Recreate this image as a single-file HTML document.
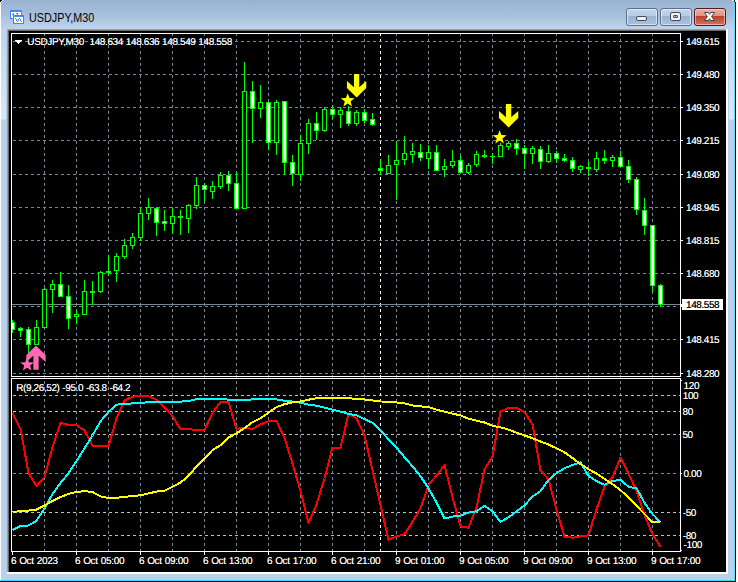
<!DOCTYPE html>
<html><head><meta charset="utf-8"><title>USDJPY,M30</title>
<style>
html,body{margin:0;padding:0;background:#fff;}
body{width:738px;height:582px;overflow:hidden;position:relative;font-family:"Liberation Sans",sans-serif;}
#win{position:absolute;left:0;top:0;width:736px;height:582px;background:#000;overflow:hidden;}
#frame{position:absolute;left:0;top:0;width:735px;height:581px;background:linear-gradient(#98b3d1 0px,#a5bedb 14px,#bed4ed 29px,#dbe8f5 119px,#b9d1ea 120px,#b9d1ea 581px);}
#lw{position:absolute;left:0;top:1px;width:1px;height:579px;background:#fdfeff;}
#cy-r{position:absolute;left:734px;top:1px;width:1px;height:580px;background:#5fd8ff;}
#cy-b{position:absolute;left:0;top:580px;width:735px;height:1px;background:#35dcf8;}
#bk-r{position:absolute;left:735px;top:2px;width:1px;height:580px;background:#000;}
#bk-b{position:absolute;left:0;top:581px;width:736px;height:1px;background:#000;}
#client{position:absolute;left:7px;top:29px;width:721px;height:545px;background:#fff;}
#client i{position:absolute;display:block}
#c1{left:0;top:0;width:719px;height:543px;background:#a0a0a0}
#c2{left:1px;top:1px;width:718px;height:542px;background:#696969}
#c3{left:2px;top:2px;width:717px;height:541px;background:#000}
#title{position:absolute;left:29px;top:10px;font-size:12px;line-height:16px;color:#000;white-space:nowrap;transform:scaleX(0.9);transform-origin:0 0;}
.btn{position:absolute;top:8px;width:32px;height:18px;box-sizing:border-box;border:1px solid #5c6e8a;border-radius:3px;background:linear-gradient(#c3d6ec 0,#b6cce5 7px,#98b3d2 7px,#a9c2de 16px);box-shadow:inset 0 0 0 1px rgba(255,255,255,.55);}
#bx{border-color:#4b1a26;background:linear-gradient(#eab2a6 0,#de9283 7px,#bb4029 7px,#d4705c 16px);box-shadow:inset 0 0 0 1px rgba(255,220,210,.6);}
svg{position:absolute;left:0;top:0}
.p{position:absolute;display:block}
.t{text-shadow:0 0 0.35px rgba(255,255,255,.75);position:absolute;font-size:10px;line-height:11px;color:#fff;white-space:pre;text-rendering:geometricPrecision;letter-spacing:-0.42px;word-spacing:0.4px;}
.k{color:#000;text-shadow:0 0 0.35px rgba(0,0,0,.75)}
.tm{letter-spacing:-0.3px}
.hd{letter-spacing:-0.38px}
.hd2{letter-spacing:-0.4px}
</style></head><body>
<div id="win">
<div id="frame"></div>
<div id="lw"></div><div id="cy-r"></div><div id="cy-b"></div><div id="bk-r"></div><div id="bk-b"></div>
<i class="p" style="left:0;top:0;width:2px;height:1px;background:#000"></i><i class="p" style="left:0;top:1px;width:1px;height:1px;background:#000"></i><i class="p" style="left:2px;top:0;width:1px;height:1px;background:#e8f0f8"></i><i class="p" style="left:1px;top:1px;width:1px;height:1px;background:#fff"></i><i class="p" style="left:734px;top:0;width:1px;height:2px;background:#111"></i><i class="p" style="left:735px;top:0;width:1px;height:2px;background:#fff"></i><i class="p" style="left:732px;top:0;width:2px;height:1px;background:#d5f3fb"></i>
<i class="p" style="left:6px;top:29px;width:1px;height:545px;background:#b5cfeb"></i><i class="p" style="left:728px;top:29px;width:1px;height:545px;background:#b5cfeb"></i>
<div id="client"><i id="c1"></i><i id="c2"></i><i id="c3"></i></div>
<div id="title">USDJPY,M30</div>
<div class="btn" id="bmin" style="left:626px"></div>
<div class="btn" id="bmax" style="left:660px"></div>
<div class="btn" id="bx" style="left:694px"></div>
<svg width="738" height="582" viewBox="0 0 738 582" shape-rendering="crispEdges">
<!-- title icon -->
<g>
<rect x="10" y="10" width="12" height="9" fill="#4a86ff"/>
<rect x="11" y="12" width="10" height="6" fill="#fffdf6"/>
<rect x="11" y="10" width="1" height="1" fill="#4b8c86"/>
<rect x="11" y="18" width="1" height="1" fill="#4b8c86"/>
<rect x="13" y="10" width="1" height="1" fill="#4b8c86"/>
<rect x="13" y="18" width="1" height="1" fill="#4b8c86"/>
<rect x="15" y="10" width="1" height="1" fill="#4b8c86"/>
<rect x="15" y="18" width="1" height="1" fill="#4b8c86"/>
<rect x="17" y="10" width="1" height="1" fill="#4b8c86"/>
<rect x="17" y="18" width="1" height="1" fill="#4b8c86"/>
<rect x="19" y="10" width="1" height="1" fill="#4b8c86"/>
<rect x="19" y="18" width="1" height="1" fill="#4b8c86"/>
<rect x="10" y="11" width="1" height="1" fill="#4b8c86"/>
<rect x="21" y="11" width="1" height="1" fill="#4b8c86"/>
<rect x="10" y="13" width="1" height="1" fill="#4b8c86"/>
<rect x="21" y="13" width="1" height="1" fill="#4b8c86"/>
<rect x="10" y="15" width="1" height="1" fill="#4b8c86"/>
<rect x="21" y="15" width="1" height="1" fill="#4b8c86"/>
<rect x="10" y="17" width="1" height="1" fill="#4b8c86"/>
<rect x="21" y="17" width="1" height="1" fill="#4b8c86"/>
<rect x="14" y="11" width="1" height="1" fill="#35c96a"/>
<rect x="18" y="11" width="1" height="1" fill="#35c96a"/>
<rect x="12" y="14" width="1" height="1" fill="#4a86ff"/>
<rect x="13" y="13" width="1" height="1" fill="#4a86ff"/>
<rect x="13" y="14" width="1" height="1" fill="#4a86ff"/>
<rect x="16" y="13" width="1" height="1" fill="#4a86ff"/>
<rect x="17" y="13" width="1" height="1" fill="#4a86ff"/>
<rect x="17" y="14" width="1" height="1" fill="#4a86ff"/>
<rect x="18" y="15" width="1" height="1" fill="#4a86ff"/>
<rect x="13" y="15" width="11" height="9" fill="#4a86ff"/>
<rect x="14" y="17" width="9" height="6" fill="#fffdf6"/>
<rect x="14" y="15" width="1" height="1" fill="#4b8c86"/>
<rect x="14" y="23" width="1" height="1" fill="#4b8c86"/>
<rect x="16" y="15" width="1" height="1" fill="#4b8c86"/>
<rect x="16" y="23" width="1" height="1" fill="#4b8c86"/>
<rect x="18" y="15" width="1" height="1" fill="#4b8c86"/>
<rect x="18" y="23" width="1" height="1" fill="#4b8c86"/>
<rect x="20" y="15" width="1" height="1" fill="#4b8c86"/>
<rect x="20" y="23" width="1" height="1" fill="#4b8c86"/>
<rect x="22" y="15" width="1" height="1" fill="#4b8c86"/>
<rect x="22" y="23" width="1" height="1" fill="#4b8c86"/>
<rect x="13" y="16" width="1" height="1" fill="#4b8c86"/>
<rect x="23" y="16" width="1" height="1" fill="#4b8c86"/>
<rect x="13" y="18" width="1" height="1" fill="#4b8c86"/>
<rect x="23" y="18" width="1" height="1" fill="#4b8c86"/>
<rect x="13" y="20" width="1" height="1" fill="#4b8c86"/>
<rect x="23" y="20" width="1" height="1" fill="#4b8c86"/>
<rect x="13" y="22" width="1" height="1" fill="#4b8c86"/>
<rect x="23" y="22" width="1" height="1" fill="#4b8c86"/>
<rect x="14" y="16" width="1" height="1" fill="#35c96a"/>
<rect x="17" y="16" width="1" height="1" fill="#40d0f0"/>
<rect x="21" y="16" width="1" height="1" fill="#35c96a"/>
<rect x="15" y="18" width="1" height="1" fill="#4a86ff"/>
<rect x="16" y="19" width="1" height="1" fill="#4a86ff"/>
<rect x="16" y="20" width="1" height="1" fill="#4a86ff"/>
<rect x="17" y="21" width="1" height="1" fill="#4a86ff"/>
<rect x="18" y="20" width="1" height="1" fill="#4a86ff"/>
<rect x="18" y="19" width="1" height="1" fill="#4a86ff"/>
<rect x="19" y="18" width="1" height="1" fill="#4a86ff"/>
<rect x="20" y="19" width="1" height="1" fill="#4a86ff"/>
<rect x="20" y="20" width="1" height="1" fill="#4a86ff"/>
<rect x="21" y="21" width="1" height="1" fill="#4a86ff"/>
</g>
<!-- button glyphs -->
<g shape-rendering="geometricPrecision"><rect x="636.5" y="16.5" width="10" height="4" rx="1.5" fill="#f1f1f1" stroke="#454a5c"/>
<rect x="670.5" y="12.5" width="10" height="8" rx="1.5" fill="#f1f1f1" stroke="#454a5c"/>
<rect x="673.5" y="15.5" width="4" height="2" rx="0.5" fill="#9fb9d8" stroke="#454a5c"/></g>
<g shape-rendering="auto"><path d="M704.5,12.5 L708.2,12.5 L709.5,14.3 L710.8,12.5 L714.5,12.5 L711.6,16.5 L714.5,20.5 L710.8,20.5 L709.5,18.7 L708.2,20.5 L704.5,20.5 L707.4,16.5 Z" fill="#fff" stroke="#3b4759" stroke-width="1" stroke-linejoin="round"/></g>
<line x1="44.5" y1="33" x2="44.5" y2="551" stroke="#778899" stroke-width="1" stroke-dasharray="3 3" stroke-dashoffset="0"/>
<line x1="76.5" y1="33" x2="76.5" y2="551" stroke="#778899" stroke-width="1" stroke-dasharray="3 3" stroke-dashoffset="0"/>
<line x1="108.5" y1="33" x2="108.5" y2="551" stroke="#778899" stroke-width="1" stroke-dasharray="3 3" stroke-dashoffset="0"/>
<line x1="140.5" y1="33" x2="140.5" y2="551" stroke="#778899" stroke-width="1" stroke-dasharray="3 3" stroke-dashoffset="0"/>
<line x1="172.5" y1="33" x2="172.5" y2="551" stroke="#778899" stroke-width="1" stroke-dasharray="3 3" stroke-dashoffset="0"/>
<line x1="204.5" y1="33" x2="204.5" y2="551" stroke="#778899" stroke-width="1" stroke-dasharray="3 3" stroke-dashoffset="0"/>
<line x1="236.5" y1="33" x2="236.5" y2="551" stroke="#778899" stroke-width="1" stroke-dasharray="3 3" stroke-dashoffset="0"/>
<line x1="268.5" y1="33" x2="268.5" y2="551" stroke="#778899" stroke-width="1" stroke-dasharray="3 3" stroke-dashoffset="0"/>
<line x1="300.5" y1="33" x2="300.5" y2="551" stroke="#778899" stroke-width="1" stroke-dasharray="3 3" stroke-dashoffset="0"/>
<line x1="332.5" y1="33" x2="332.5" y2="551" stroke="#778899" stroke-width="1" stroke-dasharray="3 3" stroke-dashoffset="0"/>
<line x1="364.5" y1="33" x2="364.5" y2="551" stroke="#778899" stroke-width="1" stroke-dasharray="3 3" stroke-dashoffset="0"/>
<line x1="396.5" y1="33" x2="396.5" y2="551" stroke="#778899" stroke-width="1" stroke-dasharray="3 3" stroke-dashoffset="0"/>
<line x1="428.5" y1="33" x2="428.5" y2="551" stroke="#778899" stroke-width="1" stroke-dasharray="3 3" stroke-dashoffset="0"/>
<line x1="460.5" y1="33" x2="460.5" y2="551" stroke="#778899" stroke-width="1" stroke-dasharray="3 3" stroke-dashoffset="0"/>
<line x1="492.5" y1="33" x2="492.5" y2="551" stroke="#778899" stroke-width="1" stroke-dasharray="3 3" stroke-dashoffset="0"/>
<line x1="524.5" y1="33" x2="524.5" y2="551" stroke="#778899" stroke-width="1" stroke-dasharray="3 3" stroke-dashoffset="0"/>
<line x1="556.5" y1="33" x2="556.5" y2="551" stroke="#778899" stroke-width="1" stroke-dasharray="3 3" stroke-dashoffset="0"/>
<line x1="588.5" y1="33" x2="588.5" y2="551" stroke="#778899" stroke-width="1" stroke-dasharray="3 3" stroke-dashoffset="0"/>
<line x1="620.5" y1="33" x2="620.5" y2="551" stroke="#778899" stroke-width="1" stroke-dasharray="3 3" stroke-dashoffset="0"/>
<line x1="652.5" y1="33" x2="652.5" y2="551" stroke="#778899" stroke-width="1" stroke-dasharray="3 3" stroke-dashoffset="0"/>
<line x1="380.5" y1="33" x2="380.5" y2="551" stroke="#ffffff" stroke-width="1" stroke-dasharray="3 3" stroke-dashoffset="0"/>
<line x1="13" y1="41.5" x2="678" y2="41.5" stroke="#778899" stroke-width="1" stroke-dasharray="3 3" stroke-dashoffset="0"/>
<line x1="13" y1="74.5" x2="678" y2="74.5" stroke="#778899" stroke-width="1" stroke-dasharray="3 3" stroke-dashoffset="0"/>
<line x1="13" y1="107.5" x2="678" y2="107.5" stroke="#778899" stroke-width="1" stroke-dasharray="3 3" stroke-dashoffset="0"/>
<line x1="13" y1="140.5" x2="678" y2="140.5" stroke="#778899" stroke-width="1" stroke-dasharray="3 3" stroke-dashoffset="0"/>
<line x1="13" y1="174.5" x2="678" y2="174.5" stroke="#778899" stroke-width="1" stroke-dasharray="3 3" stroke-dashoffset="0"/>
<line x1="13" y1="207.5" x2="678" y2="207.5" stroke="#778899" stroke-width="1" stroke-dasharray="3 3" stroke-dashoffset="0"/>
<line x1="13" y1="240.5" x2="678" y2="240.5" stroke="#778899" stroke-width="1" stroke-dasharray="3 3" stroke-dashoffset="0"/>
<line x1="13" y1="273.5" x2="678" y2="273.5" stroke="#778899" stroke-width="1" stroke-dasharray="3 3" stroke-dashoffset="0"/>
<line x1="13" y1="306.5" x2="678" y2="306.5" stroke="#778899" stroke-width="1" stroke-dasharray="3 3" stroke-dashoffset="0"/>
<line x1="13" y1="339.5" x2="678" y2="339.5" stroke="#778899" stroke-width="1" stroke-dasharray="3 3" stroke-dashoffset="0"/>
<line x1="13" y1="373.5" x2="678" y2="373.5" stroke="#778899" stroke-width="1" stroke-dasharray="3 3" stroke-dashoffset="0"/>
<line x1="13" y1="395.5" x2="680" y2="395.5" stroke="#c0c0c0" stroke-width="1" stroke-dasharray="3 3" stroke-dashoffset="0"/>
<line x1="13" y1="411.5" x2="680" y2="411.5" stroke="#c0c0c0" stroke-width="1" stroke-dasharray="3 3" stroke-dashoffset="0"/>
<line x1="13" y1="434.5" x2="680" y2="434.5" stroke="#c0c0c0" stroke-width="1" stroke-dasharray="3 3" stroke-dashoffset="0"/>
<line x1="13" y1="473.5" x2="678" y2="473.5" stroke="#778899" stroke-width="1" stroke-dasharray="3 3" stroke-dashoffset="0"/>
<line x1="13" y1="512.5" x2="680" y2="512.5" stroke="#c0c0c0" stroke-width="1" stroke-dasharray="3 3" stroke-dashoffset="0"/>
<line x1="13" y1="535.5" x2="680" y2="535.5" stroke="#c0c0c0" stroke-width="1" stroke-dasharray="3 3" stroke-dashoffset="0"/>
<rect x="12" y="304" width="668" height="1" fill="#778899"/>
<clipPath id="cm"><rect x="12" y="34" width="668" height="342"/></clipPath><clipPath id="cs"><rect x="12" y="379" width="668" height="172"/></clipPath>
<g clip-path="url(#cm)">
<rect x="12" y="320" width="1" height="13" fill="#00ff00"/>
<rect x="10" y="322" width="5" height="8" fill="#00ff00"/>
<rect x="11" y="323" width="3" height="6" fill="#ffffff"/>
<rect x="20" y="327" width="1" height="10" fill="#00ff00"/>
<rect x="18" y="328" width="5" height="3" fill="#00ff00"/>
<rect x="19" y="329" width="3" height="1" fill="#ffffff"/>
<rect x="28" y="327" width="1" height="26" fill="#00ff00"/>
<rect x="26" y="329" width="5" height="16" fill="#00ff00"/>
<rect x="27" y="330" width="3" height="14" fill="#ffffff"/>
<rect x="36" y="320" width="1" height="25" fill="#00ff00"/>
<rect x="34" y="327" width="5" height="18" fill="#00ff00"/>
<rect x="35" y="328" width="3" height="16" fill="#000000"/>
<rect x="44" y="288" width="1" height="40" fill="#00ff00"/>
<rect x="42" y="289" width="5" height="39" fill="#00ff00"/>
<rect x="43" y="290" width="3" height="37" fill="#000000"/>
<rect x="52" y="280" width="1" height="33" fill="#00ff00"/>
<rect x="50" y="284" width="5" height="6" fill="#00ff00"/>
<rect x="51" y="285" width="3" height="4" fill="#000000"/>
<rect x="60" y="272" width="1" height="25" fill="#00ff00"/>
<rect x="58" y="284" width="5" height="13" fill="#00ff00"/>
<rect x="59" y="285" width="3" height="11" fill="#ffffff"/>
<rect x="68" y="285" width="1" height="44" fill="#00ff00"/>
<rect x="66" y="296" width="5" height="23" fill="#00ff00"/>
<rect x="67" y="297" width="3" height="21" fill="#ffffff"/>
<rect x="76" y="310" width="1" height="14" fill="#00ff00"/>
<rect x="74" y="314" width="5" height="3" fill="#00ff00"/>
<rect x="75" y="315" width="3" height="1" fill="#000000"/>
<rect x="84" y="280" width="1" height="35" fill="#00ff00"/>
<rect x="82" y="291" width="5" height="24" fill="#00ff00"/>
<rect x="83" y="292" width="3" height="22" fill="#000000"/>
<rect x="92" y="281" width="1" height="24" fill="#00ff00"/>
<rect x="90" y="291" width="5" height="2" fill="#00ff00"/>
<rect x="100" y="271" width="1" height="22" fill="#00ff00"/>
<rect x="98" y="272" width="5" height="20" fill="#00ff00"/>
<rect x="99" y="273" width="3" height="18" fill="#000000"/>
<rect x="108" y="255" width="1" height="21" fill="#00ff00"/>
<rect x="106" y="271" width="5" height="2" fill="#00ff00"/>
<rect x="116" y="253" width="1" height="29" fill="#00ff00"/>
<rect x="114" y="256" width="5" height="15" fill="#00ff00"/>
<rect x="115" y="257" width="3" height="13" fill="#000000"/>
<rect x="124" y="239" width="1" height="20" fill="#00ff00"/>
<rect x="122" y="245" width="5" height="12" fill="#00ff00"/>
<rect x="123" y="246" width="3" height="10" fill="#000000"/>
<rect x="132" y="233" width="1" height="16" fill="#00ff00"/>
<rect x="130" y="237" width="5" height="9" fill="#00ff00"/>
<rect x="131" y="238" width="3" height="7" fill="#000000"/>
<rect x="140" y="208" width="1" height="33" fill="#00ff00"/>
<rect x="138" y="213" width="5" height="25" fill="#00ff00"/>
<rect x="139" y="214" width="3" height="23" fill="#000000"/>
<rect x="148" y="198" width="1" height="22" fill="#00ff00"/>
<rect x="146" y="207" width="5" height="7" fill="#00ff00"/>
<rect x="147" y="208" width="3" height="5" fill="#000000"/>
<rect x="156" y="207" width="1" height="29" fill="#00ff00"/>
<rect x="154" y="208" width="5" height="15" fill="#00ff00"/>
<rect x="155" y="209" width="3" height="13" fill="#ffffff"/>
<rect x="164" y="210" width="1" height="21" fill="#00ff00"/>
<rect x="162" y="221" width="5" height="3" fill="#00ff00"/>
<rect x="163" y="222" width="3" height="1" fill="#ffffff"/>
<rect x="172" y="208" width="1" height="26" fill="#00ff00"/>
<rect x="170" y="216" width="5" height="8" fill="#00ff00"/>
<rect x="171" y="217" width="3" height="6" fill="#000000"/>
<rect x="180" y="210" width="1" height="25" fill="#00ff00"/>
<rect x="178" y="216" width="5" height="2" fill="#00ff00"/>
<rect x="188" y="204" width="1" height="29" fill="#00ff00"/>
<rect x="186" y="205" width="5" height="14" fill="#00ff00"/>
<rect x="187" y="206" width="3" height="12" fill="#000000"/>
<rect x="196" y="177" width="1" height="32" fill="#00ff00"/>
<rect x="194" y="185" width="5" height="21" fill="#00ff00"/>
<rect x="195" y="186" width="3" height="19" fill="#000000"/>
<rect x="204" y="183" width="1" height="18" fill="#00ff00"/>
<rect x="202" y="185" width="5" height="5" fill="#00ff00"/>
<rect x="203" y="186" width="3" height="3" fill="#ffffff"/>
<rect x="212" y="181" width="1" height="18" fill="#00ff00"/>
<rect x="210" y="186" width="5" height="6" fill="#00ff00"/>
<rect x="211" y="187" width="3" height="4" fill="#000000"/>
<rect x="220" y="172" width="1" height="17" fill="#00ff00"/>
<rect x="218" y="175" width="5" height="12" fill="#00ff00"/>
<rect x="219" y="176" width="3" height="10" fill="#000000"/>
<rect x="228" y="171" width="1" height="20" fill="#00ff00"/>
<rect x="226" y="175" width="5" height="9" fill="#00ff00"/>
<rect x="227" y="176" width="3" height="7" fill="#ffffff"/>
<rect x="236" y="172" width="1" height="37" fill="#00ff00"/>
<rect x="234" y="183" width="5" height="26" fill="#00ff00"/>
<rect x="235" y="184" width="3" height="24" fill="#ffffff"/>
<rect x="244" y="62" width="1" height="147" fill="#00ff00"/>
<rect x="242" y="91" width="5" height="118" fill="#00ff00"/>
<rect x="243" y="92" width="3" height="116" fill="#000000"/>
<rect x="252" y="81" width="1" height="62" fill="#00ff00"/>
<rect x="250" y="91" width="5" height="18" fill="#00ff00"/>
<rect x="251" y="92" width="3" height="16" fill="#ffffff"/>
<rect x="260" y="85" width="1" height="33" fill="#00ff00"/>
<rect x="258" y="102" width="5" height="7" fill="#00ff00"/>
<rect x="259" y="103" width="3" height="5" fill="#000000"/>
<rect x="268" y="102" width="1" height="48" fill="#00ff00"/>
<rect x="266" y="102" width="5" height="41" fill="#00ff00"/>
<rect x="267" y="103" width="3" height="39" fill="#ffffff"/>
<rect x="276" y="100" width="1" height="55" fill="#00ff00"/>
<rect x="274" y="102" width="5" height="41" fill="#00ff00"/>
<rect x="275" y="103" width="3" height="39" fill="#000000"/>
<rect x="284" y="101" width="1" height="74" fill="#00ff00"/>
<rect x="282" y="101" width="5" height="62" fill="#00ff00"/>
<rect x="283" y="102" width="3" height="60" fill="#ffffff"/>
<rect x="292" y="155" width="1" height="31" fill="#00ff00"/>
<rect x="290" y="162" width="5" height="12" fill="#00ff00"/>
<rect x="291" y="163" width="3" height="10" fill="#ffffff"/>
<rect x="300" y="135" width="1" height="46" fill="#00ff00"/>
<rect x="298" y="143" width="5" height="32" fill="#00ff00"/>
<rect x="299" y="144" width="3" height="30" fill="#000000"/>
<rect x="308" y="119" width="1" height="35" fill="#00ff00"/>
<rect x="306" y="123" width="5" height="21" fill="#00ff00"/>
<rect x="307" y="124" width="3" height="19" fill="#000000"/>
<rect x="316" y="112" width="1" height="28" fill="#00ff00"/>
<rect x="314" y="123" width="5" height="8" fill="#00ff00"/>
<rect x="315" y="124" width="3" height="6" fill="#ffffff"/>
<rect x="324" y="107" width="1" height="25" fill="#00ff00"/>
<rect x="322" y="109" width="5" height="22" fill="#00ff00"/>
<rect x="323" y="110" width="3" height="20" fill="#000000"/>
<rect x="332" y="105" width="1" height="14" fill="#00ff00"/>
<rect x="330" y="109" width="5" height="6" fill="#00ff00"/>
<rect x="331" y="110" width="3" height="4" fill="#ffffff"/>
<rect x="340" y="107" width="1" height="21" fill="#00ff00"/>
<rect x="338" y="110" width="5" height="5" fill="#00ff00"/>
<rect x="339" y="111" width="3" height="3" fill="#000000"/>
<rect x="348" y="106" width="1" height="20" fill="#00ff00"/>
<rect x="346" y="111" width="5" height="13" fill="#00ff00"/>
<rect x="347" y="112" width="3" height="11" fill="#ffffff"/>
<rect x="356" y="110" width="1" height="16" fill="#00ff00"/>
<rect x="354" y="112" width="5" height="12" fill="#00ff00"/>
<rect x="355" y="113" width="3" height="10" fill="#000000"/>
<rect x="364" y="109" width="1" height="14" fill="#00ff00"/>
<rect x="362" y="112" width="5" height="9" fill="#00ff00"/>
<rect x="363" y="113" width="3" height="7" fill="#ffffff"/>
<rect x="372" y="113" width="1" height="13" fill="#00ff00"/>
<rect x="370" y="119" width="5" height="6" fill="#00ff00"/>
<rect x="371" y="120" width="3" height="4" fill="#ffffff"/>
<rect x="380" y="159" width="1" height="16" fill="#00ff00"/>
<rect x="378" y="168" width="5" height="3" fill="#00ff00"/>
<rect x="379" y="169" width="3" height="1" fill="#ffffff"/>
<rect x="388" y="155" width="1" height="19" fill="#00ff00"/>
<rect x="386" y="165" width="5" height="9" fill="#00ff00"/>
<rect x="387" y="166" width="3" height="7" fill="#000000"/>
<rect x="396" y="141" width="1" height="59" fill="#00ff00"/>
<rect x="394" y="160" width="5" height="5" fill="#00ff00"/>
<rect x="395" y="161" width="3" height="3" fill="#000000"/>
<rect x="404" y="136" width="1" height="29" fill="#00ff00"/>
<rect x="402" y="153" width="5" height="7" fill="#00ff00"/>
<rect x="403" y="154" width="3" height="5" fill="#000000"/>
<rect x="412" y="143" width="1" height="20" fill="#00ff00"/>
<rect x="410" y="151" width="5" height="4" fill="#00ff00"/>
<rect x="411" y="152" width="3" height="2" fill="#000000"/>
<rect x="420" y="144" width="1" height="17" fill="#00ff00"/>
<rect x="418" y="152" width="5" height="6" fill="#00ff00"/>
<rect x="419" y="153" width="3" height="4" fill="#ffffff"/>
<rect x="428" y="145" width="1" height="24" fill="#00ff00"/>
<rect x="426" y="152" width="5" height="7" fill="#00ff00"/>
<rect x="427" y="153" width="3" height="5" fill="#000000"/>
<rect x="436" y="145" width="1" height="26" fill="#00ff00"/>
<rect x="434" y="152" width="5" height="19" fill="#00ff00"/>
<rect x="435" y="153" width="3" height="17" fill="#ffffff"/>
<rect x="444" y="159" width="1" height="18" fill="#00ff00"/>
<rect x="442" y="166" width="5" height="4" fill="#00ff00"/>
<rect x="443" y="167" width="3" height="2" fill="#000000"/>
<rect x="452" y="150" width="1" height="18" fill="#00ff00"/>
<rect x="450" y="161" width="5" height="5" fill="#00ff00"/>
<rect x="451" y="162" width="3" height="3" fill="#000000"/>
<rect x="460" y="156" width="1" height="17" fill="#00ff00"/>
<rect x="458" y="160" width="5" height="13" fill="#00ff00"/>
<rect x="459" y="161" width="3" height="11" fill="#ffffff"/>
<rect x="468" y="163" width="1" height="11" fill="#00ff00"/>
<rect x="466" y="165" width="5" height="8" fill="#00ff00"/>
<rect x="467" y="166" width="3" height="6" fill="#000000"/>
<rect x="476" y="151" width="1" height="16" fill="#00ff00"/>
<rect x="474" y="154" width="5" height="11" fill="#00ff00"/>
<rect x="475" y="155" width="3" height="9" fill="#000000"/>
<rect x="484" y="150" width="1" height="8" fill="#00ff00"/>
<rect x="482" y="155" width="5" height="2" fill="#00ff00"/>
<rect x="492" y="153" width="1" height="11" fill="#00ff00"/>
<rect x="490" y="156" width="5" height="1" fill="#00ff00"/>
<rect x="500" y="143" width="1" height="14" fill="#00ff00"/>
<rect x="498" y="145" width="5" height="12" fill="#00ff00"/>
<rect x="499" y="146" width="3" height="10" fill="#000000"/>
<rect x="508" y="141" width="1" height="9" fill="#00ff00"/>
<rect x="506" y="143" width="5" height="4" fill="#00ff00"/>
<rect x="507" y="144" width="3" height="2" fill="#000000"/>
<rect x="516" y="139" width="1" height="16" fill="#00ff00"/>
<rect x="514" y="143" width="5" height="6" fill="#00ff00"/>
<rect x="515" y="144" width="3" height="4" fill="#ffffff"/>
<rect x="524" y="145" width="1" height="24" fill="#00ff00"/>
<rect x="522" y="148" width="5" height="6" fill="#00ff00"/>
<rect x="523" y="149" width="3" height="4" fill="#ffffff"/>
<rect x="532" y="146" width="1" height="18" fill="#00ff00"/>
<rect x="530" y="148" width="5" height="6" fill="#00ff00"/>
<rect x="531" y="149" width="3" height="4" fill="#000000"/>
<rect x="540" y="146" width="1" height="23" fill="#00ff00"/>
<rect x="538" y="149" width="5" height="13" fill="#00ff00"/>
<rect x="539" y="150" width="3" height="11" fill="#ffffff"/>
<rect x="548" y="145" width="1" height="18" fill="#00ff00"/>
<rect x="546" y="153" width="5" height="9" fill="#00ff00"/>
<rect x="547" y="154" width="3" height="7" fill="#000000"/>
<rect x="556" y="151" width="1" height="12" fill="#00ff00"/>
<rect x="554" y="153" width="5" height="6" fill="#00ff00"/>
<rect x="555" y="154" width="3" height="4" fill="#ffffff"/>
<rect x="564" y="154" width="1" height="8" fill="#00ff00"/>
<rect x="562" y="158" width="5" height="3" fill="#00ff00"/>
<rect x="563" y="159" width="3" height="1" fill="#ffffff"/>
<rect x="572" y="157" width="1" height="15" fill="#00ff00"/>
<rect x="570" y="160" width="5" height="9" fill="#00ff00"/>
<rect x="571" y="161" width="3" height="7" fill="#ffffff"/>
<rect x="580" y="165" width="1" height="8" fill="#00ff00"/>
<rect x="578" y="166" width="5" height="4" fill="#00ff00"/>
<rect x="579" y="167" width="3" height="2" fill="#000000"/>
<rect x="588" y="162" width="1" height="14" fill="#00ff00"/>
<rect x="586" y="167" width="5" height="2" fill="#00ff00"/>
<rect x="596" y="152" width="1" height="20" fill="#00ff00"/>
<rect x="594" y="158" width="5" height="12" fill="#00ff00"/>
<rect x="595" y="159" width="3" height="10" fill="#000000"/>
<rect x="604" y="150" width="1" height="14" fill="#00ff00"/>
<rect x="602" y="158" width="5" height="3" fill="#00ff00"/>
<rect x="603" y="159" width="3" height="1" fill="#ffffff"/>
<rect x="612" y="155" width="1" height="12" fill="#00ff00"/>
<rect x="610" y="157" width="5" height="4" fill="#00ff00"/>
<rect x="611" y="158" width="3" height="2" fill="#000000"/>
<rect x="620" y="151" width="1" height="16" fill="#00ff00"/>
<rect x="618" y="157" width="5" height="10" fill="#00ff00"/>
<rect x="619" y="158" width="3" height="8" fill="#ffffff"/>
<rect x="628" y="160" width="1" height="23" fill="#00ff00"/>
<rect x="626" y="166" width="5" height="14" fill="#00ff00"/>
<rect x="627" y="167" width="3" height="12" fill="#ffffff"/>
<rect x="636" y="177" width="1" height="38" fill="#00ff00"/>
<rect x="634" y="179" width="5" height="31" fill="#00ff00"/>
<rect x="635" y="180" width="3" height="29" fill="#ffffff"/>
<rect x="644" y="198" width="1" height="37" fill="#00ff00"/>
<rect x="642" y="210" width="5" height="16" fill="#00ff00"/>
<rect x="643" y="211" width="3" height="14" fill="#ffffff"/>
<rect x="652" y="225" width="1" height="67" fill="#00ff00"/>
<rect x="650" y="225" width="5" height="61" fill="#00ff00"/>
<rect x="651" y="226" width="3" height="59" fill="#ffffff"/>
<rect x="660" y="284" width="1" height="23" fill="#00ff00"/>
<rect x="658" y="285" width="5" height="20" fill="#00ff00"/>
<rect x="659" y="286" width="3" height="18" fill="#ffffff"/>
</g>
<g shape-rendering="crispEdges" clip-path="url(#cs)">
<polyline points="12.5,412.7 20.5,428.8 28.5,473.0 36.5,486.0 44.5,477.0 52.5,447.0 60.5,422.8 68.5,425.1 76.5,425.1 84.5,430.3 92.5,446.0 100.5,446.0 108.5,446.0 116.5,418.4 124.5,400.4 132.5,396.7 140.5,395.6 148.5,396.2 156.5,399.7 164.5,407.6 172.5,416.1 180.5,429.1 188.5,429.1 196.5,430.0 204.5,430.0 212.5,413.0 220.5,401.9 228.5,401.9 236.5,428.8 244.5,427.8 252.5,428.8 260.5,424.3 268.5,421.3 276.5,421.0 284.5,437.8 292.5,463.5 300.5,491.2 308.5,523.0 316.5,504.6 324.5,478.5 332.5,447.5 340.5,447.5 348.5,413.9 356.5,418.4 364.5,435.5 372.5,470.2 380.5,505.0 388.5,539.7 396.5,536.5 404.5,534.2 412.5,521.8 420.5,508.3 428.5,485.2 436.5,475.5 444.5,465.2 452.5,497.1 460.5,526.3 468.5,527.8 476.5,507.6 484.5,469.5 492.5,456.5 500.5,411.6 508.5,407.9 516.5,408.1 524.5,412.1 532.5,424.3 540.5,470.5 548.5,479.2 556.5,509.8 564.5,536.5 572.5,537.8 580.5,536.3 588.5,535.3 596.5,509.5 604.5,486.6 612.5,477.4 620.5,457.6 628.5,473.6 636.5,490.8 644.5,515.0 652.5,534.1 660.5,546.8" fill="none" stroke="#ff0000" stroke-width="2" stroke-linejoin="round" stroke-linecap="butt"/>
<polyline points="12.5,530.0 20.5,526.0 28.5,525.5 36.5,520.8 44.5,508.3 52.5,494.1 60.5,483.0 68.5,473.2 76.5,461.0 84.5,448.4 92.5,435.5 100.5,421.3 108.5,411.8 116.5,404.6 124.5,404.2 132.5,403.4 140.5,403.0 148.5,402.2 156.5,401.6 164.5,401.6 172.5,401.6 180.5,401.6 188.5,401.2 196.5,399.2 204.5,398.9 212.5,398.9 220.5,398.9 228.5,399.7 236.5,400.1 244.5,400.1 252.5,399.4 260.5,398.9 268.5,398.9 276.5,399.4 284.5,400.7 292.5,401.6 300.5,402.7 308.5,404.6 316.5,405.7 324.5,407.6 332.5,409.7 340.5,411.6 348.5,413.9 356.5,415.4 364.5,419.1 372.5,422.8 380.5,430.3 388.5,439.3 396.5,447.5 404.5,457.2 412.5,466.3 420.5,476.2 428.5,488.2 436.5,502.4 444.5,518.5 452.5,516.6 460.5,515.7 468.5,512.6 476.5,511.3 484.5,505.7 492.5,511.3 500.5,521.8 508.5,517.3 516.5,511.3 524.5,505.4 532.5,496.4 540.5,491.2 548.5,480.0 556.5,473.2 564.5,468.2 572.5,465.0 580.5,462.4 588.5,475.9 596.5,481.1 604.5,484.8 612.5,481.1 620.5,479.6 628.5,486.8 636.5,488.3 644.5,502.8 652.5,514.0 660.5,522.2" fill="none" stroke="#00ffff" stroke-width="2" stroke-linejoin="round" stroke-linecap="butt"/>
<polyline points="12.5,512.1 20.5,511.0 28.5,510.6 36.5,509.5 44.5,505.4 52.5,500.9 60.5,497.1 68.5,493.8 76.5,491.9 84.5,491.2 92.5,492.0 100.5,496.4 108.5,497.9 116.5,497.9 124.5,496.8 132.5,496.1 140.5,495.3 148.5,493.4 156.5,491.6 164.5,490.7 172.5,486.7 180.5,482.6 188.5,475.9 196.5,466.5 204.5,458.7 212.5,450.0 220.5,445.3 228.5,437.5 236.5,433.3 244.5,428.1 252.5,422.1 260.5,418.4 268.5,412.7 276.5,407.1 284.5,404.2 292.5,402.4 300.5,401.5 308.5,399.7 316.5,398.2 324.5,397.7 332.5,397.7 340.5,397.7 348.5,398.2 356.5,398.9 364.5,399.4 372.5,400.4 380.5,401.5 388.5,401.6 396.5,402.4 404.5,403.4 412.5,405.5 420.5,406.4 428.5,407.1 436.5,409.7 444.5,411.6 452.5,413.6 460.5,415.4 468.5,418.7 476.5,420.6 484.5,422.5 492.5,425.8 500.5,427.3 508.5,429.6 516.5,432.6 524.5,435.5 532.5,438.2 540.5,441.5 548.5,444.5 556.5,448.3 564.5,452.3 572.5,458.0 580.5,464.0 588.5,469.1 596.5,473.6 604.5,478.9 612.5,484.1 620.5,490.1 628.5,497.5 636.5,505.8 644.5,514.0 652.5,522.2 660.5,522.5" fill="none" stroke="#ffff00" stroke-width="2" stroke-linejoin="round" stroke-linecap="butt"/>
</g>
<g shape-rendering="auto">
<polygon points="347.7,93.2 349.5,98.0 354.6,98.2 350.6,101.4 352.0,106.4 347.7,103.6 343.4,106.4 344.8,101.4 340.8,98.2 345.9,98.0" fill="#ffff00"/>
<polygon points="353.95,73.90 359.25,73.90 359.25,87.20 366.25,81.00 366.25,88.00 356.60,97.50 346.95,88.00 346.95,81.00 353.95,87.20" fill="#ffff00"/>
<polygon points="499.6,130.2 501.4,135.0 506.5,135.2 502.5,138.4 503.9,143.4 499.6,140.6 495.3,143.4 496.7,138.4 492.7,135.2 497.8,135.0" fill="#ffff00"/>
<polygon points="505.95,104.00 511.25,104.00 511.25,117.30 518.25,111.10 518.25,118.10 508.60,127.60 498.95,118.10 498.95,111.10 505.95,117.30" fill="#ffff00"/>
<polygon points="27.1,357.4 29.0,362.2 34.1,362.4 30.1,365.6 31.4,370.6 27.1,367.8 22.9,370.6 24.2,365.6 20.2,362.4 25.3,362.2" fill="#ff69b4"/>
<polygon points="33.35,369.80 38.65,369.80 38.65,355.80 45.65,362.00 45.65,355.00 36.00,345.50 26.35,355.00 26.35,362.00 33.35,355.80" fill="#ff69b4"/>
</g>
<rect x="11" y="33" width="670" height="1" fill="#ffffff"/>
<rect x="11" y="33" width="1" height="344" fill="#ffffff"/>
<rect x="680" y="33" width="1" height="344" fill="#ffffff"/>
<rect x="11" y="376" width="670" height="1" fill="#ffffff"/>
<rect x="11" y="378" width="670" height="1" fill="#ffffff"/>
<rect x="11" y="378" width="1" height="174" fill="#ffffff"/>
<rect x="680" y="378" width="1" height="174" fill="#ffffff"/>
<rect x="11" y="551" width="670" height="1" fill="#ffffff"/>
<rect x="681" y="41" width="2" height="1" fill="#ffffff"/>
<rect x="681" y="74" width="2" height="1" fill="#ffffff"/>
<rect x="681" y="107" width="2" height="1" fill="#ffffff"/>
<rect x="681" y="140" width="2" height="1" fill="#ffffff"/>
<rect x="681" y="174" width="2" height="1" fill="#ffffff"/>
<rect x="681" y="207" width="2" height="1" fill="#ffffff"/>
<rect x="681" y="240" width="2" height="1" fill="#ffffff"/>
<rect x="681" y="273" width="2" height="1" fill="#ffffff"/>
<rect x="681" y="306" width="2" height="1" fill="#ffffff"/>
<rect x="681" y="339" width="2" height="1" fill="#ffffff"/>
<rect x="681" y="373" width="2" height="1" fill="#ffffff"/>
<rect x="681" y="380" width="1" height="1" fill="#ffffff"/>
<rect x="681" y="473" width="1" height="1" fill="#ffffff"/>
<rect x="681" y="550" width="1" height="1" fill="#ffffff"/>
<rect x="12" y="552" width="1" height="3" fill="#ffffff"/>
<rect x="76" y="552" width="1" height="3" fill="#ffffff"/>
<rect x="140" y="552" width="1" height="3" fill="#ffffff"/>
<rect x="204" y="552" width="1" height="3" fill="#ffffff"/>
<rect x="268" y="552" width="1" height="3" fill="#ffffff"/>
<rect x="332" y="552" width="1" height="3" fill="#ffffff"/>
<rect x="396" y="552" width="1" height="3" fill="#ffffff"/>
<rect x="460" y="552" width="1" height="3" fill="#ffffff"/>
<rect x="524" y="552" width="1" height="3" fill="#ffffff"/>
<rect x="588" y="552" width="1" height="3" fill="#ffffff"/>
<rect x="652" y="552" width="1" height="3" fill="#ffffff"/>
<path d="M15,40 h7 l-3.5,4 z" fill="#fff"/>
<rect x="682" y="299" width="41" height="11" fill="#ffffff"/>
<rect x="681" y="304" width="1" height="2" fill="#ffffff"/>
</svg>
<div class="t " style="left:686px;top:37px;">149.615</div>
<div class="t " style="left:686px;top:70px;">149.480</div>
<div class="t " style="left:686px;top:103px;">149.350</div>
<div class="t " style="left:686px;top:136px;">149.215</div>
<div class="t " style="left:686px;top:170px;">149.080</div>
<div class="t " style="left:686px;top:203px;">148.945</div>
<div class="t " style="left:686px;top:236px;">148.815</div>
<div class="t " style="left:686px;top:269px;">148.680</div>
<div class="t " style="left:686px;top:335px;">148.415</div>
<div class="t " style="left:686px;top:369px;">148.280</div>
<div class="t k" style="left:686px;top:300px;">148.558</div>
<div class="t " style="left:683.6px;top:381px;">120</div>
<div class="t " style="left:682.8px;top:391px;">100</div>
<div class="t " style="left:682.6px;top:407px;">80</div>
<div class="t " style="left:682.4px;top:430px;">50</div>
<div class="t " style="left:683.6px;top:469px;">0.00</div>
<div class="t " style="left:682.8px;top:508px;">-50</div>
<div class="t " style="left:682.8px;top:531px;">-80</div>
<div class="t " style="left:683.6px;top:540px;">-100</div>
<div class="t tm" style="left:11px;top:556px;">6 Oct 2023</div>
<div class="t tm" style="left:75px;top:556px;">6 Oct 05:00</div>
<div class="t tm" style="left:139px;top:556px;">6 Oct 09:00</div>
<div class="t tm" style="left:203px;top:556px;">6 Oct 13:00</div>
<div class="t tm" style="left:267px;top:556px;">6 Oct 17:00</div>
<div class="t tm" style="left:331px;top:556px;">6 Oct 21:00</div>
<div class="t tm" style="left:395px;top:556px;">9 Oct 01:00</div>
<div class="t tm" style="left:459px;top:556px;">9 Oct 05:00</div>
<div class="t tm" style="left:523px;top:556px;">9 Oct 09:00</div>
<div class="t tm" style="left:587px;top:556px;">9 Oct 13:00</div>
<div class="t tm" style="left:651px;top:556px;">9 Oct 17:00</div>
<div class="t hd" style="left:27.3px;top:37px;">USDJPY,M30  148.634 148.636 148.549 148.558</div>
<div class="t hd2" style="left:16.3px;top:383px;">R(9,26,52) -95.0 -63.8 -64.2</div>
</div>
</body></html>
